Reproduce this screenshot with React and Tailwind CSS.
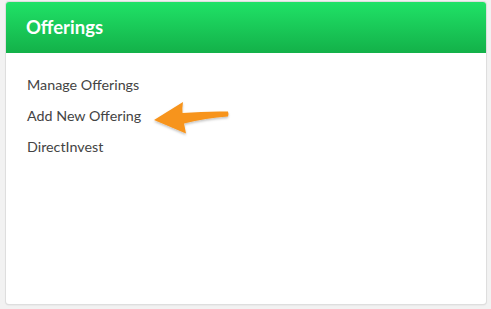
import React from 'react';

const links = ['Manage Offerings', 'Add New Offering', 'DirectInvest'];

function Arrow() {
  // annotation arrow, box starts at (144,96)
  return (
    <svg
      className="pointer-events-none absolute left-[144px] top-[96px]"
      width="84"
      height="42"
      viewBox="0 0 84 42"
    >
      <defs>
        <filter id="sh" x="-20%" y="-20%" width="140%" height="160%">
          <feDropShadow dx="0" dy="1.5" stdDeviation="1.2" floodColor="#000" floodOpacity="0.25" />
        </filter>
      </defs>
      <path
        d="M4 22 L33 4 Q32 10 32.5 15 Q56 13 78 13.5 Q79 16 78 18.5 Q56 20 34 25.5 Q35 30 36 35.5 Z"
        fill="#f7941d"
        filter="url(#sh)"
      />
    </svg>
  );
}

export default function App() {
  return (
    <div className="h-[309px] w-[491px] bg-[#f2f2f2] pt-[2px] pl-[6px] font-['Lato','Open_Sans',sans-serif]">
      <div className="relative flex h-[302px] w-[480px] flex-col overflow-hidden rounded-[3px] bg-white shadow-[0_0_0_1px_#dedede,0_1px_2px_rgba(0,0,0,0.12)]">
        <div className="flex h-[51px] items-center bg-gradient-to-b from-[#20e267] to-[#13b149] px-[20px]">
          <h2 className="text-[18.5px] font-bold text-white">Offerings</h2>
        </div>
        <ul className="flex flex-col gap-[14px] pt-[23px] pl-[21px] text-[14.3px] text-[#444]">
          {links.map((l) => (
            <li key={l} className="leading-[17px]">{l}</li>
          ))}
        </ul>
        <Arrow />
      </div>
    </div>
  );
}
